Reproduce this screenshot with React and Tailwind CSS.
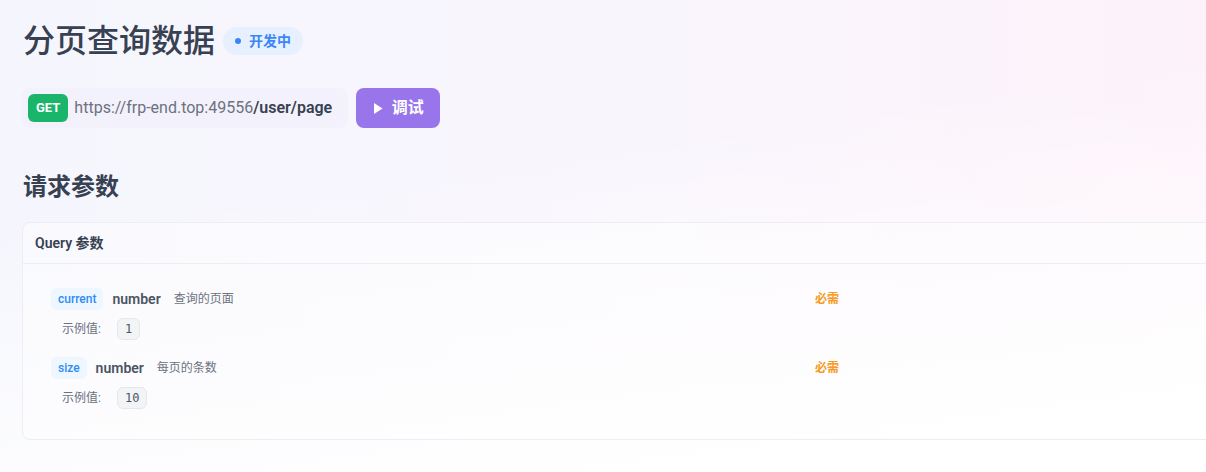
import React from "react";

const params = [
  { name: "current", type: "number", desc: "查询的页面", example: "1" },
  { name: "size", type: "number", desc: "每页的条数", example: "10" },
];

function ParamRow({ p }) {
  return (
    <div className="flex flex-col gap-[8px]">
      <div className="flex items-center">
        <div className="flex items-center w-[764px]">
          <span className="h-[22px] px-[7px] flex items-center rounded-md bg-[#eef6ff] text-[#2f8cf5] text-[12px] font-medium">
            {p.name}
          </span>
          <span className="ml-[9px] text-[14px] font-semibold text-[#4b5563]">{p.type}</span>
          <span className="ml-[13px] text-[12px] text-[#6b7280]">{p.desc}</span>
        </div>
        <span className="text-[12px] font-bold text-[#f59a23]">必需</span>
      </div>
      <div className="flex items-center ml-[11px]">
        <span className="w-[55px] text-[12px] text-[#6b7280]">示例值:</span>
        <span className="h-[22px] px-[7px] flex items-center rounded-md bg-[#f3f4f6] border border-[#e5e7eb] text-[12px] text-[#4b5563] font-['DejaVu_Sans_Mono',monospace]">
          {p.example}
        </span>
      </div>
    </div>
  );
}

export default function App() {
  return (
    <div className="min-h-screen w-full overflow-hidden bg-[linear-gradient(172deg,transparent_35%,#ffffff_88%),linear-gradient(to_right,#f5f6fd,#f9f5fd_55%,#fdf2fa)] font-['Roboto','Noto_Sans_CJK_SC',sans-serif]">
      <div className="pl-[22px] pt-[20px] pb-[33px]">
        <div className="flex items-center gap-[8px]">
          <h1 className="ml-px text-[32px] leading-[42px] font-medium text-[#374151]">分页查询数据</h1>
          <span className="h-[28px] px-[12px] flex items-center gap-[8px] rounded-full bg-[#e7f0fe] text-[#3b86f7] text-[14px] font-semibold">
            <span className="w-[6px] h-[6px] rounded-full bg-[#3b86f7]" />
            开发中
          </span>
        </div>

        <div className="mt-[26px] flex items-center gap-[8px]">
          <div className="h-[40px] flex items-center gap-[6px] pl-[6px] pr-[16px] rounded-lg bg-[#f3f1fb]">
            <span className="h-[28px] px-[8px] flex items-center rounded-md bg-[#1bb46b] text-white text-[13px] font-bold">
              GET
            </span>
            <span className="text-[16px] text-[#6b7280]">
              https://frp-end.top:49556<span className="font-semibold text-[#374151]">/user/page</span>
            </span>
          </div>
          <button className="h-[40px] w-[84px] flex items-center justify-center gap-[9px] rounded-lg bg-[#9875ea] text-white text-[16px] font-bold">
            <svg width="10" height="13" viewBox="0 0 10 13" fill="currentColor">
              <path d="M1 1 L9.5 6.5 L1 12 Z" />
            </svg>
            调试
          </button>
        </div>

        <h2 className="mt-[43px] ml-px text-[24px] leading-[32px] font-bold text-[#374151]">请求参数</h2>

        <div className="mt-[19px] w-[1220px] rounded-lg border border-[#eceef2] bg-white/40">
          <div className="h-[41px] px-[12px] flex items-center border-b border-[#eceef2] text-[14px] font-semibold text-[#374151]">
            Query 参数
          </div>
          <div className="px-[28px] pt-[24px] pb-[30px] flex flex-col gap-[17px]">
            {params.map((p) => (
              <ParamRow key={p.name} p={p} />
            ))}
          </div>
        </div>
      </div>
    </div>
  );
}
